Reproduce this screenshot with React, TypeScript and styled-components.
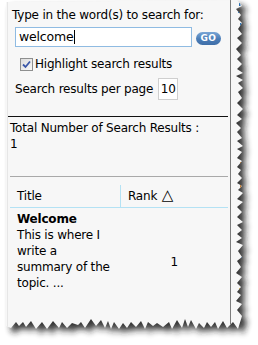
import React from "react";
import styled, { createGlobalStyle } from "styled-components";

const GlobalStyle = createGlobalStyle`
  html, body { margin: 0; padding: 0; background: #ffffff; }
  body { width: 258px; height: 345px; overflow: hidden; }
  #root { width: 258px; height: 345px; }
`;

const Frame = styled.div`
  position: relative;
  width: 258px;
  height: 345px;
  overflow: hidden;
  background: #ffffff;
`;

const PaperArt = styled.svg`
  position: absolute;
  left: 0;
  top: 0;
  width: 258px;
  height: 345px;
  pointer-events: none;
`;

const Pane = styled.div`
  position: relative;
  z-index: 1;
  margin: 2px 0 0 7px;
  width: 223px;
  font-family: "DejaVu Sans", Verdana, sans-serif;
  font-size: 12px;
  letter-spacing: -0.2px;
  color: #000;
`;

const SearchForm = styled.div`
  padding: 5px 0 0 5px;
`;

const Prompt = styled.div`
  line-height: 16px;
`;

const InputRow = styled.div`
  display: flex;
  align-items: center;
  gap: 4px;
  margin: 4px 0 0 3px;
`;

const TextBox = styled.div`
  box-sizing: border-box;
  width: 177px;
  height: 20px;
  border: 1px solid #8fbbe2;
  background: #ffffff;
  padding: 0 0 0 3px;
  line-height: 18px;
  font-size: 12.5px;
  display: flex;
  align-items: center;
`;

const Caret = styled.span`
  display: inline-block;
  width: 1px;
  height: 14px;
  background: #000;
  margin-left: 1px;
`;

const GoButton = styled.button`
  box-sizing: border-box;
  width: 25px;
  height: 13px;
  margin-top: 2px;
  padding: 0;
  border: none;
  border-radius: 7px;
  background: linear-gradient(#7aa6d6, #4a7cb6 55%, #3f6ea8);
  color: #ffffff;
  font-family: "DejaVu Sans", Verdana, sans-serif;
  font-weight: bold;
  font-size: 9px;
  letter-spacing: 0.5px;
  line-height: 13px;
  text-align: center;
`;

const CheckRow = styled.label`
  display: flex;
  align-items: center;
  gap: 2px;
  margin: 9px 0 0 8px;
  line-height: 16px;
`;

const CheckBox = styled.span`
  box-sizing: border-box;
  width: 13px;
  height: 13px;
  border: 1px solid #8e8f8f;
  background: linear-gradient(135deg, #dcdcdc, #f8f8f8);
  display: flex;
  align-items: center;
  justify-content: center;
`;

const PerPageRow = styled.div`
  display: flex;
  align-items: center;
  gap: 5px;
  margin: 6px 0 0 3px;
  height: 22px;
`;

const PerPageBox = styled.div`
  box-sizing: border-box;
  width: 20px;
  height: 22px;
  border: 1px solid #cfcfcf;
  background: #ffffff;
  text-align: center;
  line-height: 20px;
`;

const Rule = styled.div<{ $color: string; $left: number; $top: number }>`
  height: 1px;
  width: ${(p) => 228 - 7 - p.$left}px;
  margin: ${(p) => p.$top}px 0 0 ${(p) => p.$left}px;
  background: ${(p) => p.$color};
`;

const Totals = styled.div`
  padding: 3px 0 0 3px;
  line-height: 16px;
`;

const Results = styled.table`
  margin: 8px 0 0 3px;
  width: 218px;
  border-collapse: collapse;
  font-size: 12px;
  table-layout: fixed;
`;

const HeadCell = styled.th<{ $w?: number; $divider?: boolean }>`
  ${(p) => (p.$w ? `width: ${p.$w}px;` : "")}
  text-align: left;
  font-weight: normal;
  padding: 3px 0 3px 7px;
  line-height: 16px;
  height: 16px;
  border-bottom: 1px solid #b4e2f4;
  ${(p) => (p.$divider ? "border-left: 1px solid #b4e2f4;" : "")}
`;

const SortMark = styled.span`
  font-size: 15px;
  line-height: 12px;
  margin-left: 1px;
`;

const TitleCell = styled.td`
  padding: 3px 9px 24px 7px;
  line-height: 16px;
  vertical-align: middle;
`;

const RankCell = styled.td`
  text-align: center;
  vertical-align: middle;
  padding: 0;
`;

const TopicName = styled.div`
  font-weight: bold;
`;

function buildPaper() {
  let s = 11;
  const rnd = () => {
    s = (s * 9301 + 49297) % 233280;
    return s / 233280;
  };
  const pts: string[] = [];
  pts.push("6,2");
  let y = 0;
  let i = 0;
  while (y < 320) {
    const x = (i % 2 ? 241 : 236) + Math.round(rnd() * 2);
    pts.push(`${x},${y}`);
    y += 3 + Math.floor(rnd() * 4);
    i++;
  }
  let x = 238;
  i = 0;
  while (x > 8) {
    const yy = (i % 2 ? 321 : 327) + Math.round(rnd() * 2) - (rnd() > 0.8 ? 2 : 0);
    pts.push(`${x},${yy}`);
    x -= 3 + Math.floor(rnd() * 4);
    i++;
  }
  pts.push("6,326");
  return pts.join(" ");
}

const paperPoints = buildPaper();

const specks: [number, number, string][] = [
  [239, 3, "#2a6fb0"],
  [238, 10, "#2a6fb0"],
  [240, 23, "#2a6fb0"],
  [239, 123, "#c07a30"],
  [240, 140, "#5a2a80"],
  [240, 162, "#c07a30"],
  [240, 185, "#c07a30"],
  [241, 252, "#c07a30"],
  [241, 257, "#2a6fb0"],
  [239, 288, "#c0a040"],
  [239, 298, "#2a6fb0"],
];

function TornPaper() {
  return (
    <PaperArt viewBox="0 0 258 345">
      <defs>
        <filter id="sh" x="-10%" y="-10%" width="130%" height="130%">
          <feGaussianBlur stdDeviation="3" />
        </filter>
        <clipPath id="paperClip">
          <polygon points={paperPoints} />
        </clipPath>
      </defs>
      <polygon points={paperPoints} transform="translate(5 5)" fill="#1e1e1e" opacity="0.9" filter="url(#sh)" />
      <polygon points={paperPoints} fill="#f7f7f7" />
      <g clipPath="url(#paperClip)">
        <rect x="230" y="0" width="1" height="345" fill="#7c7c7c" />
        <rect x="7" y="2" width="1" height="345" fill="#e6e6e6" />
        {specks.map(([sx, sy, c], k) => (
          <rect key={k} x={sx} y={sy} width="1.5" height="3" fill={c} />
        ))}
      </g>
    </PaperArt>
  );
}

export default function App() {
  return (
    <Frame>
      <GlobalStyle />
      <TornPaper />
      <Pane>
        <SearchForm>
          <Prompt>Type in the word(s) to search for:</Prompt>
          <InputRow>
            <TextBox>
              welcome
              <Caret />
            </TextBox>
            <GoButton type="button">GO</GoButton>
          </InputRow>
          <CheckRow>
            <CheckBox>
              <svg width="9" height="9" viewBox="0 0 9 9">
                <path d="M1 4.5 L3.5 7 L8 1.5" fill="none" stroke="#3a57a8" strokeWidth="1.8" />
              </svg>
            </CheckBox>
            Highlight search results
          </CheckRow>
          <PerPageRow>
            <span>Search results per page</span>
            <PerPageBox>10</PerPageBox>
          </PerPageRow>
        </SearchForm>
        <Rule $color="#111" $left={1} $top={16} />
        <Totals>
          Total Number of Search Results :
          <br />1
        </Totals>
        <Rule $color="#a9a9a9" $left={3} $top={24} />
        <Results>
          <thead>
            <tr>
              <HeadCell $w={103}>Title</HeadCell>
              <HeadCell $divider>
                Rank <SortMark>△</SortMark>
              </HeadCell>
            </tr>
          </thead>
          <tbody>
            <tr>
              <TitleCell>
                <TopicName>Welcome</TopicName>
                This is where I write a summary of the topic. ...
              </TitleCell>
              <RankCell>1</RankCell>
            </tr>
          </tbody>
        </Results>
      </Pane>
    </Frame>
  );
}
